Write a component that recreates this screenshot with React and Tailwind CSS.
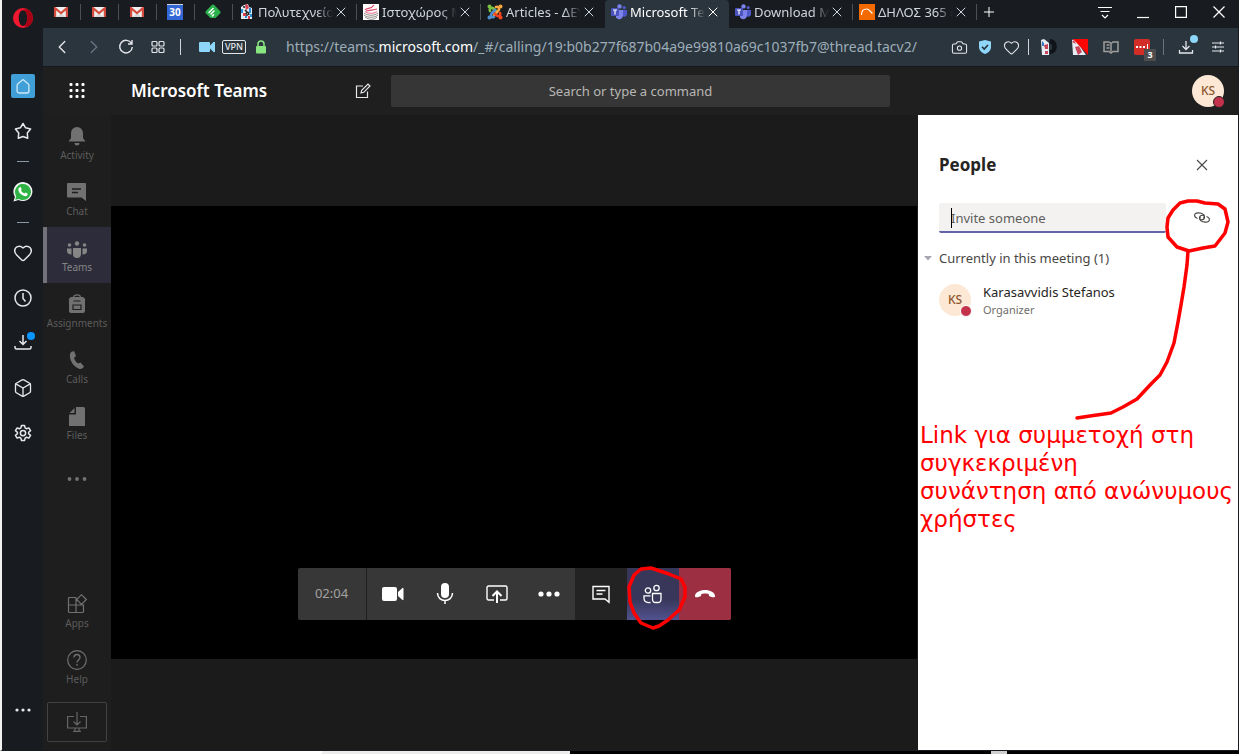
import { Box, Camera, ChevronLeft, ChevronRight, Heart, Plus, X } from "lucide-react";

function Icon({ size = 20, box = 24, className = "", children, ...rest }) {
  return (
    <svg
      width={size}
      height={size}
      viewBox={`0 0 ${box} ${box}`}
      fill="none"
      stroke="currentColor"
      strokeWidth="1.5"
      className={`shrink-0 ${className}`}
      aria-hidden="true"
      {...rest}
    >
      {children}
    </svg>
  );
}

/* ---------- favicons ---------- */

function GmailIcon() {
  return (
    <Icon size={14} box={14} stroke="none">
      <path d="M0 2h14v10H0z" fill="#f1f1f1" />
      <path d="M3 12l4-4 4 4z" fill="#d8d8d8" />
      <path d="M0 2h1.500L7 6.800 12.500 2H14v10h-2.200V5.600L7 9.600 2.200 5.600V12H0z" fill="#d54b3d" />
    </Icon>
  );
}

function CalendarIcon() {
  return (
    <span className="flex h-4 w-4 items-center justify-center border-t border-gray-300 bg-[#3367d6] text-[10px] font-bold text-white">
      30
    </span>
  );
}

function FeedlyIcon() {
  return (
    <Icon size={16} box={16} stroke="none">
      <path d="M6.600 1.200a2 2 0 0 1 2.800 0l5.600 5.700a2 2 0 0 1 0 2.600L10.500 14h-5L1 9.500a2 2 0 0 1 0-2.600z" fill="#2bb24c" />
      <path d="M4 8.500l4-4M6 10l3-3M7.300 12l1.200-1.200" stroke="#fff" strokeWidth="1.500" strokeLinecap="round" />
    </Icon>
  );
}

function CrestIcon() {
  return (
    <Icon size={16} box={16} stroke="none">
      <path d="M2 3l3-2 4-1 1 3 3 1v11H2z" fill="#dfeaf2" />
      <path d="M6 1l2-1 2 4-3 2zM4 9h3v3H4zM9 12h2v3H9z" fill="#d8404c" />
      <path d="M2 5h2v4H2zM10 4h2v5h-2zM6 12h2v2H6zM11 10h2v3h-2z" fill="#2a8fd8" />
      <path d="M6 6l2 2-1 2M9 8l1 3M5 2v2M8 10v2" stroke="#222" />
    </Icon>
  );
}

function BooksIcon() {
  return (
    <Icon size={16} box={16}>
      <path d="M0 0h16v16H0z" fill="#fff" stroke="none" />
      <path d="M2 6c2-3 6 0 9-5M3 7c4-1 8-1 11-2" stroke="#e0466a" strokeWidth="1.200" />
      <path d="M2 7.500c3 2.500 9 2.500 12 0" stroke="#f08aa2" strokeWidth="1.200" />
      <path d="M1 9c4 3 10 3 14 0M1 11c4 3 10 3 14 0M2 13c4 3 9 3 12 0" stroke="#8d8983" strokeWidth="1" />
    </Icon>
  );
}

function JoomlaIcon() {
  return (
    <Icon size={16} box={16} strokeWidth="2.600" strokeLinecap="round">
      <path d="M3 7c-1-3 2-4 4-2l3 3" stroke="#7ac143" />
      <path d="M9 3c3-1 4 2 2 4l-4 4" stroke="#f9a541" />
      <path d="M13 9c1 3-2 4-4 2L6 8" stroke="#f44321" />
      <path d="M7 13c-3 1-4-2-2-4l3-3" stroke="#5091cd" />
      <g stroke="none">
        <circle cx="2.500" cy="2.500" r="2" fill="#7ac143" />
        <circle cx="13.500" cy="2.500" r="2" fill="#f9a541" />
        <circle cx="13.500" cy="13.500" r="2" fill="#f44321" />
        <circle cx="2.500" cy="13.500" r="2" fill="#5091cd" />
      </g>
    </Icon>
  );
}

function TeamsLogo() {
  return (
    <Icon size={16} box={16} stroke="none">
      <circle cx="8.500" cy="2.400" r="2.200" fill="#7b83eb" />
      <circle cx="13.200" cy="3.600" r="1.600" fill="#5059c9" />
      <path d="M11 6h5v4.500a2.700 2.700 0 0 1-5 1z" fill="#5059c9" />
      <path d="M5 6h7v6a3.800 3.800 0 0 1-7 1.500z" fill="#7b83eb" />
      <rect y="4" width="8" height="8" rx="1" fill="#4b53bc" />
      <path d="M2 6h4M4 6v4.500" stroke="#fff" strokeWidth="1.200" />
    </Icon>
  );
}

function DilosIcon() {
  return (
    <Icon size={16} box={16}>
      <path d="M0 0h16v16H0z" fill="#f26a00" stroke="none" />
      <path d="M2.500 11c0-4 2-6 5-6 3 0 3 2 6 4.500" stroke="#fff" strokeWidth="1.200" />
    </Icon>
  );
}

/* ---------- browser chrome ---------- */

const pinned = [
  { label: "Gmail", icon: GmailIcon },
  { label: "Gmail", icon: GmailIcon },
  { label: "Gmail", icon: GmailIcon },
  { label: "Calendar", icon: CalendarIcon },
  { label: "Feedly", icon: FeedlyIcon },
];

const tabs = [
  { title: "Πολυτεχνείο", icon: CrestIcon },
  { title: "Ιστοχώρος Μ", icon: BooksIcon },
  { title: "Articles - ΔΕΥ", icon: JoomlaIcon, last: true },
  { title: "Microsoft Te", icon: TeamsLogo, active: true },
  { title: "Download M", icon: TeamsLogo },
  { title: "ΔΗΛΟΣ 365 ›", icon: DilosIcon },
];

function TabBar() {
  return (
    <div className="flex h-7 items-stretch bg-[#181c20] text-gray-300">
      {pinned.map(({ label, icon: TabIcon }, i) => (
        <button key={i} aria-label={label} className="relative flex w-[38px] items-center justify-center pr-0.5 pb-1">
          <TabIcon />
          <span className="absolute top-1 right-0 h-4 w-px bg-[#4b5055]" />
        </button>
      ))}
      {tabs.map(({ title, icon: TabIcon, active, last }) => (
        <div
          key={title}
          className={`relative flex w-[124px] items-center rounded-t-sm pr-2 pb-1 pl-1.5 ${active ? "bg-[#2b353e] text-white" : ""}`}
        >
          <TabIcon />
          <button className="ml-[3px] min-w-0 flex-1 [mask-image:linear-gradient(to_right,black_78%,transparent)] text-left text-[13px] leading-5 whitespace-nowrap">
            {title}
          </button>
          <button aria-label="Close tab">
            <X size={16} strokeWidth={1.5} />
          </button>
          {!active && !last && <span className="absolute top-1 right-0 h-4 w-px bg-[#4b5055]" />}
        </div>
      ))}
      <button aria-label="New tab" className="flex w-6 items-center justify-center pb-1 text-white">
        <Plus size={16} strokeWidth={1.5} />
      </button>
      <div className="ml-auto flex pb-1 text-white">
        <button aria-label="Tab menu" className="flex w-[38px] items-center justify-center">
          <Icon size={16} box={16} strokeWidth="1.200">
            <path d="M1 3.500h14M3.500 7.500h9M5 11l3 3 3-3" />
          </Icon>
        </button>
        <button aria-label="Minimize" className="flex w-[38px] items-center justify-center">
          <Icon size={14} box={14} strokeWidth="1.200">
            <path d="M1 12.500h12" />
          </Icon>
        </button>
        <button aria-label="Maximize" className="flex w-[38px] items-center justify-center">
          <Icon size={12} box={12} strokeWidth="1.200">
            <path d="M.6.600h10.800v10.800H.6z" />
          </Icon>
        </button>
        <button aria-label="Close" className="flex w-[38px] items-center justify-center">
          <Icon size={14} box={14} strokeWidth="1.200">
            <path d="M1.500 1.500l11 11M12.500 1.500l-11 11" />
          </Icon>
        </button>
      </div>
    </div>
  );
}

function AddressBar() {
  return (
    <div className="flex h-[39px] items-center border-b border-[#14181c] bg-[#2b353e] pl-[3px] text-gray-200">
      <button aria-label="Back" className="flex w-8 justify-center">
        <ChevronLeft size={22} strokeWidth={1.5} />
      </button>
      <button aria-label="Forward" className="flex w-8 justify-center text-gray-500">
        <ChevronRight size={22} strokeWidth={1.5} />
      </button>
      <button aria-label="Reload" className="flex w-8 justify-center">
        <Icon size={16} box={16} strokeWidth="1.400">
          <path d="M13.500 4.500A6.300 6.300 0 1 0 14.300 8M14 1v4h-4" />
        </Icon>
      </button>
      <button aria-label="Speed dial" className="flex w-8 justify-center">
        <Icon size={14} box={14} strokeWidth="1.200">
          <rect x="1" y="1.500" width="5" height="4.500" rx="1" />
          <rect x="8" y="1.500" width="5" height="4.500" rx="1" />
          <rect x="1" y="8" width="5" height="4.500" rx="1" />
          <rect x="8" y="8" width="5" height="4.500" rx="1" />
        </Icon>
      </button>
      <span className="mx-1.5 h-4 w-px bg-gray-300" />
      <button aria-label="Camera access" className="ml-3">
        <Icon size={16} box={16} stroke="none" fill="#8fd6fb">
          <path d="M1 3h9a1 1 0 0 1 1 1v2.500L14.500 3H16v10h-1.500L11 9.500V12a1 1 0 0 1-1 1H1a1 1 0 0 1-1-1V4a1 1 0 0 1 1-1z" />
        </Icon>
      </button>
      <button className="ml-[7px] h-3.5 w-6 rounded-xs border border-gray-200 text-center text-[9px] leading-3 font-medium">
        VPN
      </button>
      <Icon size={14} box={14} className="ml-2" stroke="#89e580">
        <path d="M4 6V4a3 3 0 0 1 6 0v2" strokeWidth="1.500" />
        <rect x="2" y="6" width="10" height="7.500" rx="1" fill="#89e580" stroke="none" />
      </Icon>
      <div
        role="textbox"
        aria-label="Address"
        className="ml-[18px] min-w-0 flex-1 text-[14px] leading-5 whitespace-nowrap text-[#9dadb8]"
      >
        https://teams.<span className="text-white">microsoft.com</span>
        /_#/calling/19:b0b277f687b04a9e99810a69c1037fb7@thread.tacv2/
      </div>
      <button aria-label="Snapshot" className="flex w-[26px] justify-center">
        <Camera size={17} strokeWidth={1.5} />
      </button>
      <button aria-label="Site security" className="flex w-[26px] justify-center">
        <Icon size={14} box={14} stroke="none">
          <path d="M7 0l6 1.500V7c0 3.500-3 6-6 7-3-1-6-3.500-6-7V1.500z" fill="#8fd6fb" />
          <path d="M4 6.800l2.200 2.200L10 5" stroke="#24303a" strokeWidth="1.600" />
        </Icon>
      </button>
      <button aria-label="Bookmark" className="flex w-[26px] justify-center">
        <Heart size={17} strokeWidth={1.5} />
      </button>
      <span className="ml-1 h-4 w-px bg-gray-300" />
      <div className="ml-1 flex">
        <button aria-label="Call extension" className="flex w-[31px] justify-center">
          <Icon size={16} box={16} stroke="none">
            <path d="M0 1l3-1 5 4v12H1z" fill="#e8edf3" />
            <path d="M3 6l4-1v5H4zM4 12h3v3H4z" fill="#c8455a" />
            <path d="M1 2l2 2v3H1z" fill="#3b7cc0" />
            <path d="M9 0c9 0 9 15 0 15l-.5-4 2.500-.5v-5L8.500 5z" fill="#101317" />
          </Icon>
        </button>
        <button aria-label="Blocker extension" className="flex w-[31px] justify-center">
          <Icon size={16} box={16} stroke="none">
            <path d="M0 1l3-1 11 16H1z" fill="#e8edf3" />
            <path d="M3 8l4-1 3 6-4 3zM0 3l2-2 2 4z" fill="#c8455a" />
            <path d="M1 0h15v16z" fill="#fb0505" />
          </Icon>
        </button>
        <button aria-label="Reader" className="flex w-[31px] justify-center text-[#a09e9a]">
          <Icon size={16} box={16} strokeWidth="1.500">
            <path d="M8 4.500L6 3H1v9.500h5l2 1.500 2-1.500h5V3h-5zM8 4.500v8M3.500 6h3M3.500 9h3" />
          </Icon>
        </button>
        <button aria-label="Passwords" className="relative flex w-[31px] justify-center">
          <Icon size={16} box={16} stroke="none">
            <rect width="16" height="16" rx="2" fill="#d32d27" />
            <path d="M2 7h2v2H2zM5.500 7h2v2h-2zM9 7h2v2H9zM13 5h1v6h-1z" fill="#fff" />
          </Icon>
          <span className="absolute top-2.5 left-[18px] h-3 w-3 bg-[#4d4d4d] text-center text-[9px] leading-3 font-bold text-white">
            3
          </span>
        </button>
      </div>
      <span className="ml-1.5 h-4 w-px bg-gray-500" />
      <button aria-label="Downloads" className="relative ml-1.5 flex w-8 justify-center">
        <Icon size={16} box={16} strokeWidth="1.300">
          <path d="M8 2v8M4.500 7L8 10.500 11.500 7M1.500 11v3h13v-3" />
        </Icon>
        <span className="absolute -top-1 right-1 h-2 w-2 rounded-full bg-[#8fd6fb]" />
      </button>
      <button aria-label="Easy setup" className="mr-1 flex w-8 justify-center">
        <Icon size={14} box={14} strokeWidth="1.200">
          <path d="M1 3h12M1 7h12M1 11h12M9.500 1.500v3M4.500 5.500v3M9.500 9.500v3" />
        </Icon>
      </button>
    </div>
  );
}

function SideButton({ label, children }) {
  return (
    <button aria-label={label} className="relative flex h-[45px] w-full items-center justify-center">
      {children}
    </button>
  );
}

function SideDivider() {
  return (
    <div className="flex h-4 items-center">
      <span className="h-px w-3 bg-[#8b99a3]" />
    </div>
  );
}

function OperaSidebar() {
  return (
    <nav className="flex w-[41px] shrink-0 flex-col items-center bg-[#181c21] text-gray-200">
      <button aria-label="Opera" className="mb-7 flex h-[35px] items-center">
        <Icon size={20} box={20} stroke="none">
          <path
            d="M10 0a10 10 0 1 0 0 20 10 10 0 0 0 0-20zm0 2.200c2.500 0 4.300 3.500 4.300 7.800s-1.800 7.800-4.300 7.800S5.700 14.300 5.700 10 7.500 2.200 10 2.200z"
            fill="#f0182f"
            fillRule="evenodd"
          />
          <path d="M10 2.200c2-1.200 4-1 5.800-.3A10 10 0 0 1 15.800 18c-2 .9-4 .8-5.800-.2 2.500 0 4.300-3.500 4.300-7.800S12.500 2.200 10 2.200z" fill="#a70014" />
        </Icon>
      </button>
      <SideButton label="Speed dial">
        <span className="flex h-6 w-6 items-center justify-center rounded-xs bg-[#3f9fd6]">
          <Icon size={16} box={16} stroke="#cfe9f7" strokeWidth="1.300">
            <path d="M8 1.500l5 4.300c.6.500.9 1 .9 1.800V13a2 2 0 0 1-2 2H4.100a2 2 0 0 1-2-2V7.600c0-.8.300-1.300.9-1.800z" />
          </Icon>
        </span>
      </SideButton>
      <SideButton label="Bookmarks">
        <Icon size={18} box={18} strokeWidth="1.500" strokeLinejoin="round">
          <path d="M9 1.500l2.600 4.300 5 1.300-3.300 4 .4 5.100L9 14.500l-4.700 1.700.4-5.100-3.300-4 5-1.300z" />
        </Icon>
      </SideButton>
      <SideDivider />
      <SideButton label="WhatsApp">
        <Icon size={20} box={20} stroke="none">
          <path d="M.5 19.500l1.400-4.800A9.500 9.500 0 1 1 5.500 18z" fill="#f4f7f5" />
          <path d="M2.200 17.800l1-3.600A8 8 0 1 1 6 16.900z" fill="#2fb344" />
          <path d="M6.500 5.500c.8-.7 1.300-.4 1.600.4l.5 1.200c.2.500-.7 1.100-.5 1.500.7 1.300 1.700 2.200 3.100 2.800.5.200 1-.9 1.500-.8l1.700.8c.5.300.2 1.400-.3 2-1 1-2.400.9-4 .2-2.300-1-4.200-3-4.700-5.300-.2-1.100.2-2 1.100-2.800z" fill="#fff" />
        </Icon>
      </SideButton>
      <SideDivider />
      <SideButton label="Likes">
        <Heart size={20} strokeWidth={1.8} />
      </SideButton>
      <SideButton label="History">
        <Icon size={18} box={18} strokeWidth="1.500">
          <circle cx="9" cy="9" r="8" />
          <path d="M9 4v5.500l2.500 3" />
        </Icon>
      </SideButton>
      <SideButton label="Downloads">
        <Icon size={18} box={18} strokeWidth="1.500">
          <path d="M9 1v9M5.500 7L9 10.500 12.500 7M1 12v1.500c0 1 .5 1.500 1.500 1.500h13c1 0 1.500-.5 1.500-1.500V12" />
        </Icon>
        <span className="absolute top-3 right-2 h-2 w-2 rounded-full bg-[#0a95ff]" />
      </SideButton>
      <SideButton label="Extensions">
        <Box size={20} strokeWidth={1.6} />
      </SideButton>
      <SideButton label="Settings">
        <Icon size={18} box={24} strokeWidth="2" strokeLinejoin="round">
          <path d="M10 2h4l.8 3.200 2 1.100 3-1.100 2.300 3.600L19.500 11v2l2.600 2.200-2.300 3.600-3-1.100-2 1.100L14 22h-4l-.8-3.200-2-1.100-3 1.100-2.300-3.600L4.500 13v-2L1.900 8.800l2.300-3.600 3 1.100 2-1.100z" />
          <circle cx="12" cy="12" r="3.500" />
        </Icon>
      </SideButton>
      <div className="mt-auto mb-[18px] w-full">
        <SideButton label="More">
          <Icon size={16} box={16} fill="currentColor" stroke="none">
            <circle cx="2" cy="8" r="1.600" />
            <circle cx="8" cy="8" r="1.600" />
            <circle cx="14" cy="8" r="1.600" />
          </Icon>
        </SideButton>
      </div>
    </nav>
  );
}

/* ---------- Teams ---------- */

function Avatar({ ring }) {
  return (
    <span className="relative flex h-8 w-8 shrink-0 items-center justify-center rounded-full bg-[#fce8d5] text-xs font-medium text-[#8e562e]">
      KS
      <span className={`absolute -right-px -bottom-px h-3 w-3 rounded-full border bg-[#c4314b] ${ring}`} />
    </span>
  );
}

function TeamsHeader() {
  return (
    <header className="flex h-12 items-center bg-[#1f1f1f]">
      <div className="flex w-[348px] shrink-0 items-center pr-5">
        <button aria-label="Apps launcher" className="flex w-[68px] justify-center text-white">
          <Icon size={16} box={16} stroke="none" fill="currentColor">
            {[0, 6, 12].map((y) => [0, 6, 12].map((x) => <rect key={`${x}-${y}`} x={x + 0.5} y={y} width="3" height="3" rx="1" />))}
          </Icon>
        </button>
        <h1 className="pl-5 text-[17px] leading-6 font-semibold text-white">Microsoft Teams</h1>
        <button aria-label="New chat" className="ml-auto text-gray-200">
          <Icon size={16} box={16} strokeWidth="1.200">
            <path d="M8 3H1.500v11.500h11V8.500M6 10l.7-2.800L13 1l2 2-6.300 6.300z" />
          </Icon>
        </button>
      </div>
      <input
        aria-label="Search"
        placeholder="Search or type a command"
        className="h-8 min-w-0 flex-1 rounded-xs bg-[#363636] pr-5 text-center text-[13px] outline-none placeholder:text-[#b8b6b4]"
      />
      <div className="flex w-[348px] shrink-0 justify-end pr-[14px]">
        <button aria-label="Profile">
          <Avatar ring="border-[#1f1f1f]" />
        </button>
      </div>
    </header>
  );
}

function RailItem({ label, active, children }) {
  return (
    <button
      className={`flex h-14 w-full flex-col items-center pt-[11px] ${
        active ? "border-l-4 border-[#737179] bg-[#2d2c3b] pr-1 text-[#858585]" : "text-[#5c5c5c]"
      }`}
    >
      <Icon size={20} box={20} className={active ? "text-[#858585]" : "text-[#717171]"}>
        {children}
      </Icon>
      <span className="mt-px text-[10px] leading-4">{label}</span>
    </button>
  );
}

function TeamsRail() {
  return (
    <nav className="flex w-[68px] shrink-0 flex-col bg-[#1e1e1e]">
      <RailItem label="Activity">
        <path d="M10 1a6 6 0 0 1 6 6v5l2.500 3.500h-17L4 12V7a6 6 0 0 1 6-6zM7.500 17h5a2.500 2.500 0 0 1-5 0z" fill="currentColor" stroke="none" />
      </RailItem>
      <RailItem label="Chat">
        <path d="M1 1h17a1 1 0 0 1 1 1v17l-4.500-3.500H1a1 1 0 0 1-1-1V2a1 1 0 0 1 1-1z" fill="currentColor" stroke="none" />
        <path d="M5 7h9M5 10.500h6" stroke="#1e1e1e" />
      </RailItem>
      <RailItem label="Teams" active>
        <g fill="currentColor" stroke="none">
          <circle cx="2.500" cy="7" r="1.800" />
          <circle cx="10" cy="5.500" r="2.200" />
          <circle cx="17.500" cy="7" r="1.800" />
          <path d="M0 10.500h4.500v6C1.500 16.500 0 15 0 13zM20 10.500h-4.500v6c3 0 4.500-1.500 4.500-3.500zM6 10h8v6a4 4 0 0 1-8 0z" />
        </g>
      </RailItem>
      <RailItem label="Assignments">
        <path d="M6.500 3.500c0-3.500 7-3.500 7 0" strokeWidth="1.200" />
        <path d="M5 3h10a3 3 0 0 1 3 4v10a2 2 0 0 1-2 2H4a2 2 0 0 1-2-2V7a3 3 0 0 1 3-4z" fill="currentColor" stroke="none" />
        <path d="M6.500 7h7M6 11h8v4.500H6z" stroke="#1e1e1e" strokeWidth="1.200" />
      </RailItem>
      <RailItem label="Calls">
        <path d="M4 2l3-1 2 5-2 2c.8 2.400 2.200 4.200 4 5.500l2.500-1 3.500 4c-1 2-3 2.800-5 2.200C6.500 16.500 3.500 11.500 3 7c-.2-2 0-3.500 1-5z" fill="currentColor" stroke="none" />
      </RailItem>
      <RailItem label="Files">
        <path d="M9 1h7.500a1.500 1.500 0 0 1 1.500 1.500v17a1.500 1.500 0 0 1-1.500 1.500h-13A1.500 1.500 0 0 1 2 19.500V8.500h7zM7.500 2v5h-5z" fill="currentColor" stroke="none" />
      </RailItem>
      <button aria-label="More apps" className="flex h-14 items-center justify-center text-[#717171]">
        <Icon size={20} box={20} fill="currentColor" stroke="none">
          <circle cx="2.500" cy="10" r="1.900" />
          <circle cx="10" cy="10" r="1.900" />
          <circle cx="17.500" cy="10" r="1.900" />
        </Icon>
      </button>
      <div className="mt-auto">
        <RailItem label="Apps">
          <path d="M9 3.500H2.500a1 1 0 0 0-1 1v13a1 1 0 0 0 1 1h13a1 1 0 0 0 1-1V11h-15M9 3.500v15M14.500.700l4.800 4.800-4.800 4.800-4.800-4.800z" strokeWidth="1.200" />
        </RailItem>
        <RailItem label="Help">
          <circle cx="10" cy="10" r="9.300" strokeWidth="1.200" />
          <path d="M7 7.500c0-4 6-4 6 0 0 2.500-3 2.500-3 5M10 14v1.800" strokeWidth="1.300" />
        </RailItem>
      </div>
      <button
        aria-label="Download desktop app"
        className="mx-1 mt-[7px] mb-2 flex h-10 items-center justify-center rounded-xs border border-[#424242] text-[#666]"
      >
        <Icon size={20} box={20} strokeWidth="1.200">
          <path d="M7 4.500H.6v11.500h18.800V4.500H13M8 16v3M12 16v3M6 19.400h8M10 0v13M6.500 9.500L10 13l3.500-3.500" />
        </Icon>
      </button>
    </nav>
  );
}

function CallButton({ label, className = "", children }) {
  return (
    <button aria-label={label} className={`relative flex w-[52px] items-center justify-center text-white ${className}`}>
      {children}
    </button>
  );
}

function CallBar() {
  return (
    <div className="flex h-[52px] rounded-xs bg-[#373737]">
      <span className="flex w-[69px] items-center justify-center border-r border-[#1f1f1f] text-[13px] text-[#a5a3a1]">02:04</span>
      <CallButton label="Camera">
        <Icon size={22} box={22} fill="currentColor" stroke="none">
          <path d="M2 4h11a2 2 0 0 1 2 2v10a2 2 0 0 1-2 2H2a2 2 0 0 1-2-2V6a2 2 0 0 1 2-2zM16 9l4.500-4a.6.600 0 0 1 1 .500v11a.6.600 0 0 1-1 .500L16 13z" />
        </Icon>
      </CallButton>
      <CallButton label="Microphone">
        <Icon size={22} box={22} strokeWidth="1.500">
          <rect x="7" y="0" width="8" height="15" rx="4" fill="currentColor" stroke="none" />
          <path d="M3.500 10c0 10 15 10 15 0M11 17.500V21" />
        </Icon>
      </CallButton>
      <CallButton label="Share screen">
        <Icon size={22} box={22} strokeWidth="1.400">
          <path d="M8 17H2.500a1.500 1.500 0 0 1-1.500-1.500v-11A1.500 1.500 0 0 1 2.500 3h17A1.500 1.500 0 0 1 21 4.500v11a1.500 1.500 0 0 1-1.500 1.500H14" />
          <path d="M11 20V9M6.500 13L11 8.500l4.500 4.500" strokeWidth="2" />
        </Icon>
      </CallButton>
      <CallButton label="More actions">
        <Icon size={22} box={22} fill="currentColor" stroke="none">
          <circle cx="3" cy="11" r="2.600" />
          <circle cx="11" cy="11" r="2.600" />
          <circle cx="19" cy="11" r="2.600" />
        </Icon>
      </CallButton>
      <CallButton label="Conversation" className="bg-[#232323]">
        <Icon size={20} box={20} strokeWidth="1.400">
          <path d="M2 2.500h16v15.800L14 15H2zM5.500 6.500h9M5.500 10h6" />
        </Icon>
      </CallButton>
      <CallButton label="Participants" className="bg-gradient-to-b from-[#38375a] from-60% to-[#525290]">
        <Icon size={20} box={20} strokeWidth="1.300">
          <circle cx="5" cy="6.500" r="2.700" />
          <circle cx="13.500" cy="4" r="2.700" />
          <path d="M7.500 18.500c-4 .5-6.500-1-6.500-4v-2.700h6.500M9.500 9.500H18V15c0 2-1.200 3.500-3 3.500h-2.500c-1.800 0-3-1.500-3-3.500z" />
        </Icon>
        {/* hand-drawn marker round the participants button */}
        <svg
          className="pointer-events-none absolute top-0 left-0 z-10 overflow-visible"
          width="52"
          height="52"
          fill="none"
          stroke="#ff0000"
          strokeWidth="3.5"
          strokeLinejoin="round"
          aria-hidden="true"
        >
          <path d="M14 1L24 0 30 2 42 6 54 11 58 19 58 29 52 42 41 52 32 58 26 60 14 55 7 45 3 34 2 19 7 7z" />
        </svg>
      </CallButton>
      <CallButton label="Hang up" className="rounded-r-xs bg-[#9c2f42]">
        <Icon size={22} box={22} fill="currentColor" stroke="none">
          <path d="M11 7c5 0 10 2.500 10 6 0 1.500-1 1.500-2.500 1.200l-2.500-.7c-1.500-.5-1-2-1.500-2.500-1.500-.8-5.500-.8-7 0-.5.500 0 2-1.500 2.500l-2.500.7C2 14.500 1 14.500 1 13c0-3.500 5-6 10-6z" />
        </Icon>
      </CallButton>
    </div>
  );
}

function PeoplePanel() {
  return (
    <aside className="relative w-80 shrink-0 bg-white text-[#252423]">
      <div className="flex h-[88px] items-center pt-3 pr-7 pl-[21px]">
        <h2 className="text-[17px] leading-6 font-bold">People</h2>
        <button aria-label="Close people pane" className="ml-auto text-[#484644]">
          <Icon size={16} box={16} strokeWidth="1.100">
            <path d="M3 3l10 10M13 3L3 13" />
          </Icon>
        </button>
      </div>
      <div className="flex items-center pr-7 pl-[21px]">
        <input
          aria-label="Invite someone"
          placeholder="Invite someone"
          className="h-[30px] w-[227px] rounded-xs border-b-2 border-[#6264a7] bg-[#f3f2f1] px-3 pt-0.5 text-[13px] outline-none placeholder:text-[#605e5c]"
        />
        <span className="pointer-events-none absolute left-[33px] h-5 w-px bg-black" />
        <button aria-label="Copy join link" className="ml-auto text-[#484644]">
          <Icon size={16} box={16} strokeWidth="1.100">
            <path d="M3.500 8.500C1.500 7.800.6 6.500.600 5.300.600 3.800 2 2.800 4.500 2.900c3.800.2 6 2.200 6 4.300 0 1.600-1.200 2.600-2.900 2.600-1.400 0-2.200-.9-1.900-1.900.1-.5.600-.9 1.200-.9" />
            <path d="M12.500 6.500c2 .7 2.900 2 2.900 3.200 0 1.500-1.400 2.500-3.900 2.400-3.800-.2-6-2.200-6-4.300 0-1.600 1.200-2.600 2.900-2.600 1.400 0 2.200.9 1.900 1.900-.1.500-.6.900-1.200.9" />
          </Icon>
        </button>
      </div>
      <button className="mt-[15px] flex w-full items-center pl-1.5 text-[13px] leading-5 text-[#484644]">
        <Icon size={8} box={8} stroke="none" fill="#a6a7ae" className="mr-[7px]">
          <path d="M0 2h8L4 6.500z" />
        </Icon>
        Currently in this meeting (1)
      </button>
      <div className="mt-4 flex h-8 items-center pl-[21px]">
        <Avatar ring="border-white" />
        <div className="ml-3">
          <p className="text-[13px] leading-5">Karasavvidis Stefanos</p>
          <p className="text-[11px] leading-4 text-[#6f6d6b]">Organizer</p>
        </div>
      </div>
      <p className="mt-[105px] pl-0.5 font-['DejaVu_Sans',sans-serif] text-[23px] leading-7 whitespace-nowrap text-[#ff0000]">
        Link για συμμετοχή στη
        <br />
        συγκεκριμένη
        <br />
        συνάντηση από ανώνυμους
        <br />
        χρήστες
      </p>
      {/* hand-drawn marker from the link button to the note */}
      <svg
        className="pointer-events-none absolute top-0 left-0"
        width="320"
        height="310"
        fill="none"
        stroke="#ff0000"
        strokeWidth="3.5"
        strokeLinejoin="round"
        strokeLinecap="round"
        aria-hidden="true"
      >
        <path d="M262 88L270 86 279 86 287 88 300 89 307 94 310 107 307 118 297 131 285 133 271 136 259 132 250 122 249 112 250 103 255 95z" />
        <path d="M270 136L269 150 266 172 263 190 260 207 256 228 249 247 242 260 233 269 219 284 205 292 193 298 172 301 159 303" />
      </svg>
    </aside>
  );
}

export default function App() {
  return (
    <div className="flex min-h-screen flex-col bg-[#181c21] font-['Noto_Sans',sans-serif]">
      <div className="flex flex-1 border-r border-b border-l-2 border-r-[#181c21] border-b-[#181c21] border-l-[#f2f2f0]">
        <OperaSidebar />
        <div className="flex min-w-0 flex-1 flex-col">
          <TabBar />
          <AddressBar />
          <TeamsHeader />
          <div className="flex flex-1">
            <TeamsRail />
            <main className="flex min-w-0 flex-1 items-center border-r border-[#1b1b1b] bg-[#1b1b1b]">
              <div className="flex aspect-video w-full items-end justify-center bg-black pb-[39px]">
                <CallBar />
              </div>
            </main>
            <PeoplePanel />
          </div>
        </div>
      </div>
      {/* sliver of the window behind */}
      <div className="flex h-[3px] bg-black">
        <span className="w-[26%] bg-white" />
        <span className="w-[20%] bg-[#ececec]" />
        <span className="ml-[34%] w-4 bg-[#cfcfcf]" />
      </div>
    </div>
  );
}
